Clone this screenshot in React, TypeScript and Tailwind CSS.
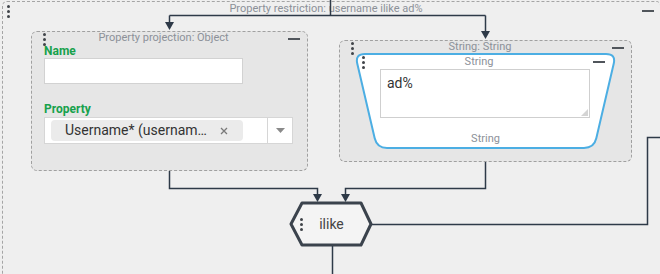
import React from 'react';

const Dots = ({ className = '' }: { className?: string }) => (
  <div className={`flex flex-col gap-[2px] shrink-0 ${className}`}>
    <div className="w-[3px] h-[3px] rounded-full bg-[#404449]" />
    <div className="w-[3px] h-[3px] rounded-full bg-[#404449]" />
    <div className="w-[3px] h-[3px] rounded-full bg-[#404449]" />
  </div>
);

const Minus = ({ className = '' }: { className?: string }) => (
  <div className={`w-[12px] h-[2px] shrink-0 bg-[#50555b] ${className}`} />
);

function Arrow({ x, y }: { x: number; y: number }) {
  return <polygon points={`${x - 4.5},${y - 8} ${x + 4.5},${y - 8} ${x},${y}`} fill="#2e3a48" />;
}

export default function App() {
  return (
    <div className="relative w-[660px] h-[274px] overflow-hidden bg-[#efefef] font-['Roboto',sans-serif]">
      {/* restricción externa */}
      <div className="absolute left-[2px] top-[1px] w-[659px] h-[330px] rounded-[5px] border border-dashed border-[#a5a5a5] bg-[#efefef]">
        <div className="flex items-start h-[14px] pl-[4px] pr-[6px]">
          <Dots className="mt-[3px]" />
          <div className="flex-1 text-center text-[11px] leading-[14px] text-[#8c9199]">
            Property restriction: username ilike ad%
          </div>
          <Minus className="mt-[8px]" />
        </div>
      </div>

      {/* property projection */}
      <div className="absolute left-[31px] top-[31px] w-[277px] h-[140px] rounded-[6px] border border-dashed border-[#a0a0a0] bg-[#e6e6e6]">
        <div className="flex items-start h-[12px] pl-[11px] pr-[7px]">
          <Dots className="mt-[1px]" />
          <div className="flex-1 mr-[7px] text-center text-[11px] leading-[12px] text-[#8c9199] whitespace-nowrap">
            Property projection: Object
          </div>
          <Minus className="mt-[6px]" />
        </div>
        <div className="pl-[12px] pr-[13px]">
          <div className="text-[12px] leading-[14px] font-bold text-[#17a14c]">Name</div>
          <div className="w-[199px] h-[26px] bg-white border border-[#d2d2d2]" />
          <div className="mt-[18px] text-[12px] leading-[14px] font-bold text-[#17a14c]">Property</div>
          <div className="mt-[1px] flex h-[27px] w-[249px] bg-white border border-[#d6d6d6]">
            <div className="flex-1 flex items-center pl-[6px]">
              <div className="flex items-center h-[21px] w-[192px] rounded-[4px] bg-[#ebebeb] pl-[14px] pr-[15px]">
                <span className="text-[14px] text-[#333] whitespace-nowrap">Username* (usernam…</span>
                <svg className="ml-auto" width="8" height="8" viewBox="0 0 8 8">
                  <path d="M1 1L7 7M7 1L1 7" stroke="#7a7a7a" strokeWidth="1.3" />
                </svg>
              </div>
            </div>
            <div className="w-[25px] border-l border-[#d6d6d6] flex items-center justify-center">
              <svg width="9" height="5" viewBox="0 0 9 5">
                <polygon points="0,0 9,0 4.5,5" fill="#8a8a8a" />
              </svg>
            </div>
          </div>
        </div>
      </div>

      {/* string: string */}
      <div className="absolute left-[339px] top-[40px] w-[293px] h-[122px] rounded-[6px] border border-dashed border-[#a0a0a0] bg-[#e6e6e6]">
        <div className="flex items-start h-[11px] pl-[11px] pr-[7px]">
          <Dots className="mt-[1px]" />
          <div className="flex-1 mr-[6px] text-center text-[11px] leading-[12px] text-[#8c9199]">String: String</div>
          <Minus className="mt-[6px]" />
        </div>
        <div className="relative ml-[13px] w-[265px] h-[98px]">
          <svg className="absolute inset-0" width="265" height="98" viewBox="0 0 265 98">
            <path
              d="M12 2 L253 2 Q263 2 260.7 11.7 L243.3 86.3 Q241 96 231 96 L34 96 Q24 96 21.7 86.3 L4.3 11.7 Q2 2 12 2 Z"
              fill="#ffffff"
              stroke="#4caee3"
              strokeWidth="2"
            />
          </svg>
          <div className="relative flex items-start h-[16px] pt-[4px] pl-[9px] pr-[13px]">
            <Dots />
            <div className="flex-1 text-center text-[11px] leading-[12px] text-[#8c9199]">String</div>
            <Minus className="mt-[5px]" />
          </div>
          <div className="relative ml-[27px] mt-[1px] w-[210px] h-[49px] border border-[#cfcfcf] bg-white px-[6px] pt-[3px]">
            <div className="text-[14px] leading-[20px] text-[#333]">ad%</div>
            <svg className="absolute right-[1px] bottom-[1px]" width="7" height="7" viewBox="0 0 7 7">
              <polygon points="7,0 7,7 0,7" fill="#d4d4d4" />
            </svg>
          </div>
          <div className="relative mt-[15px] text-center text-[11px] leading-[12px] text-[#8c9199]">String</div>
        </div>
      </div>

      {/* ilike */}
      <div className="absolute left-[288px] top-[200px] w-[86px] h-[48px] flex items-center justify-center">
        <svg className="absolute inset-0" width="86" height="48" viewBox="0 0 86 48">
          <polygon points="3,24 14,3 73,3 83,24 73,45 14,45" fill="#f4f4f4" stroke="#3b434d" strokeWidth="3" strokeLinejoin="round" />
        </svg>
        <Dots className="absolute left-[12px] top-[18px]" />
        <span className="relative text-[14px] text-[#444] pl-[1px]">ilike</span>
      </div>

      {/* conectores */}
      <svg className="absolute inset-0 pointer-events-none" width="660" height="274" viewBox="0 0 660 274">
        <g fill="none" stroke="#2e3a48" strokeWidth="1.5">
          <path d="M330.5 0 V15.5" />
          <path d="M169.5 15.5 H485.5" />
          <path d="M169.5 15.5 V24" />
          <path d="M485.5 15.5 V33" />
          <path d="M169.5 171 V188.5 H317.5 V196" />
          <path d="M485.5 162 V188.5 H345.5 V196" />
          <path d="M372 224.5 H647.5 V137.5 H660" />
          <path d="M332.5 246 V274" />
        </g>
        <Arrow x={169.5} y={30} />
        <Arrow x={485.5} y={39} />
        <Arrow x={317.5} y={202} />
        <Arrow x={345.5} y={202} />
      </svg>
    </div>
  );
}
